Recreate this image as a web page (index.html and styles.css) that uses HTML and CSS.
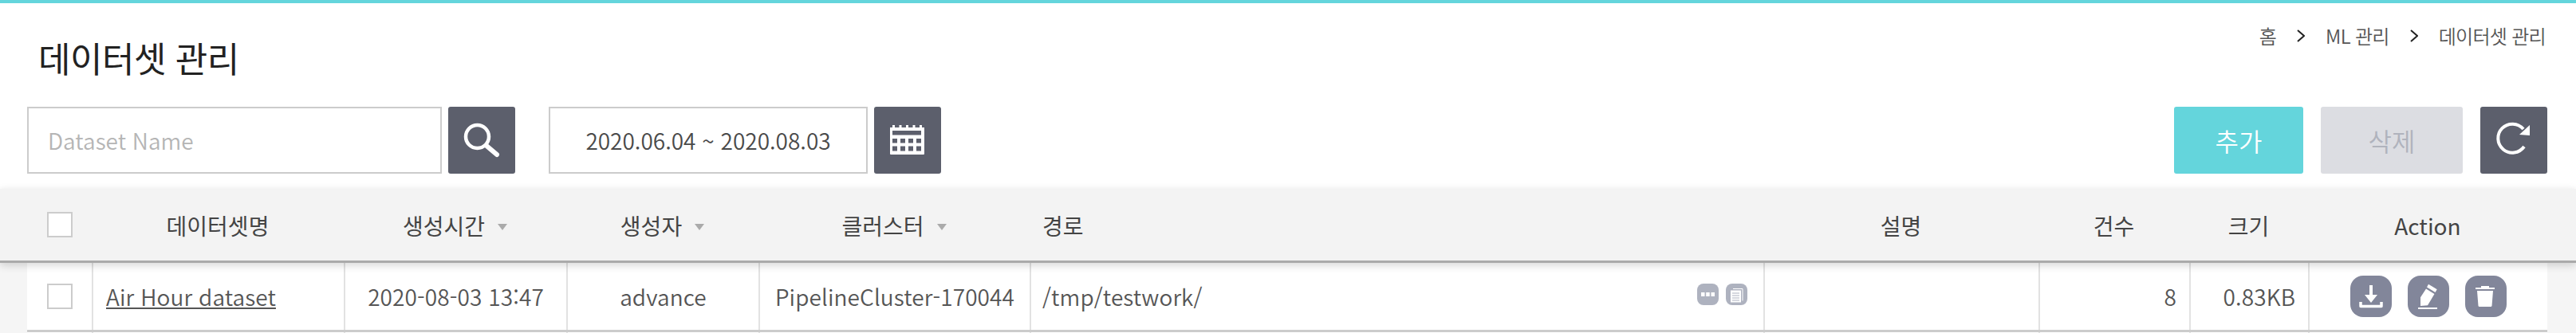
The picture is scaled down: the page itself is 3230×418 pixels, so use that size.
FILE: index.html
```html
<!DOCTYPE html>
<html lang="ko">
<head>
<meta charset="UTF-8">
<meta name="viewport" content="width=device-width, initial-scale=1.0">
<title>데이터셋 관리</title>
<link rel="stylesheet" href="styles.css">
</head>
<body>

<!-- Title and breadcrumb -->
<div class="page-head">
    <h1 class="page-title">데이터셋 관리</h1>
    <div class="breadcrumb">
        <span>홈</span>
        <svg class="crumb-sep" viewBox="0 0 10 16"><path d="M1 1l8 7-8 7" fill="none" stroke="#222" stroke-width="2"/></svg>
        <span>ML 관리</span>
        <svg class="crumb-sep" viewBox="0 0 10 16"><path d="M1 1l8 7-8 7" fill="none" stroke="#222" stroke-width="2"/></svg>
        <span>데이터셋 관리</span>
    </div>
</div>

<!-- Toolbar -->
<div class="toolbar">
    <div class="field field-name">Dataset Name</div>
    <button class="icon-btn">
        <svg viewBox="0 0 84 84"><circle cx="36.5" cy="37.5" r="14.5" fill="none" stroke="#fff" stroke-width="4.5"/><path d="M48 49l13 11" stroke="#fff" stroke-width="6" stroke-linecap="round"/></svg>
    </button>
    <div class="field field-date">2020.06.04 ~ 2020.08.03</div>
    <button class="icon-btn">
        <svg viewBox="0 0 84 84">
            <path fill="#fff" d="M20 26h3v-3h3v3h5.500v-3h3v3h5.500v-3h3v3h5.500v-3h3v3h5.500v-3h3v3h3v33a1 1 0 0 1-1 1H21a1 1 0 0 1-1-1z"/>
            <path fill="#5c5f6c" d="M23 30h36v5.500H23zM23 40h6v5.500h-6zM33 40h6v5.500h-6zM43 40h6v5.500h-6zM53 40h6v5.500h-6zM23 49.500h6v6h-6zM33 49.500h6v6h-6zM43 49.500h6v6h-6zM53 49.500h6v6h-6z"/>
        </svg>
    </button>
    <div class="toolbar-right">
        <button class="btn btn-add">추가</button>
        <button class="btn btn-del">삭제</button>
        <button class="icon-btn btn-refresh">
            <svg viewBox="0 0 84 84"><path d="M54 28A18 18 0 1 0 55 50" fill="none" stroke="#fff" stroke-width="4"/><path fill="#fff" d="M62 23l0 13-13-1z"/></svg>
        </button>
    </div>
</div>

<!-- Table -->
<div class="grid-head">
    <div class="cell"><span class="check"></span></div>
    <div class="cell"><span class="head-label">데이터셋명</span></div>
    <div class="cell"><span class="head-label">생성시간</span><i class="sort"></i></div>
    <div class="cell"><span class="head-label">생성자</span><i class="sort"></i></div>
    <div class="cell"><span class="head-label">클러스터</span><i class="sort"></i></div>
    <div class="cell cell-left"><span class="head-label">경로</span></div>
    <div class="cell"><span class="head-label">설명</span></div>
    <div class="cell"><span class="head-label">건수</span></div>
    <div class="cell"><span class="head-label">크기</span></div>
    <div class="cell"><span class="head-label">Action</span></div>
</div>

<div class="grid-row">
    <div class="cell"><span class="check"></span></div>
    <div class="cell cell-left"><a href="#" class="name-link">Air Hour dataset</a></div>
    <div class="cell">2020-08-03 13:47</div>
    <div class="cell">advance</div>
    <div class="cell">PipelineCluster-170044</div>
    <div class="cell cell-left cell-path">
        <span>/tmp/testwork/</span>
        <span class="path-icons">
            <span class="mini-btn"><svg viewBox="0 0 27 27"><path fill="#fff" d="M5 11h4.500v5H5zM11.200 11h4.500v5h-4.500zM17.500 11H22v5h-4.500z"/></svg></span>
            <span class="mini-btn"><svg viewBox="0 0 27 27"><path fill="none" stroke="#fff" d="M9 6.500h12v15"/><path fill="#fff" d="M6 8.500h13v15H6z"/><path stroke="#aeb2bf" stroke-width="1.200" d="M8 12h9M8 15h9M8 18h9M8 21h9"/></svg></span>
        </span>
    </div>
    <div class="cell"></div>
    <div class="cell cell-right">8</div>
    <div class="cell cell-right">0.83KB</div>
    <div class="cell cell-actions">
        <span class="act-btn"><svg viewBox="0 0 52 52"><path fill="#fff" d="M24 12h4v12h6l-8 10-8-10h6z"/><path fill="none" stroke="#fff" stroke-width="3.500" stroke-linejoin="round" d="M13 33v5.500h26V33"/></svg></span>
        <span class="act-btn"><svg viewBox="0 0 52 52"><path fill="#fff" d="M26 10.700l10.700 6.600-2.200 3.700-10.500-6.500zM23 16.500l10.500 6.500L25 37.300l-9 .7V27.300z"/><path stroke="#fff" stroke-width="2" d="M13 41h24"/></svg></span>
        <span class="act-btn"><svg viewBox="0 0 52 52"><path fill="#fff" d="M15 19h20l-1.500 19a1.500 1.500 0 0 1-1.500 1H18a1.500 1.500 0 0 1-1.500-1z"/><path stroke="#fff" stroke-width="2" d="M13 16h24M20 14h10"/></svg></span>
    </div>
</div>
<div class="grid-row grid-row-next">
    <div class="cell"></div><div class="cell"></div><div class="cell"></div><div class="cell"></div><div class="cell"></div>
    <div class="cell"></div><div class="cell"></div><div class="cell"></div><div class="cell"></div><div class="cell"></div>
</div>

</body>
</html>
```

FILE: styles.css
```css
/* Dataset management page */
html, body {
    margin: 0;
    height: 418px;
    overflow: hidden;
}

body {
    background-color: #f5f5f5;
    font-family: "Noto Sans CJK KR", "Noto Sans", sans-serif;
    font-weight: 350;
    color: #555;
}

button {
    border: 0;
    padding: 0;
    font-family: inherit;
    font-weight: inherit;
}

.page-head {
    display: flex;
    justify-content: space-between;
    align-items: flex-start;
    box-sizing: border-box;
    height: 134px;
    border-top: 4px solid #64d5dc;
    padding: 0 38px 0 48px;
    background-color: #fff;
}

.page-title {
    margin: 0;
    padding-top: 39px;
    font-size: 44px;
    line-height: 58px;
    letter-spacing: -0.5px;
    font-weight: 400;
    color: #222;
}

.breadcrumb {
    display: flex;
    align-items: center;
    gap: 26px;
    padding-top: 24px;
    font-size: 24px;
    line-height: 34px;
    letter-spacing: -0.7px;
}

.crumb-sep {
    width: 10px;
    height: 16px;
}

.toolbar {
    display: flex;
    height: 84px;
    padding: 0 36px 19px 34px;
    background-color: #fff;
}

.field {
    display: flex;
    align-items: center;
    box-sizing: border-box;
    height: 84px;
    border: 2px solid #ccc;
    font-size: 28px;
    background-color: #fff;
}

.field-name {
    width: 520px;
    padding-left: 24px;
    color: #b5b5b5;
}

.field-date {
    justify-content: center;
    width: 400px;
    margin-left: 42px;
    color: #4a4a4a;
}

.icon-btn {
    flex: none;
    width: 84px;
    height: 84px;
    margin-left: 8px;
    border-radius: 3px;
    background-color: #5c5f6c;
}

.icon-btn svg {
    display: block;
    width: 84px;
    height: 84px;
}

.toolbar-right {
    display: flex;
    margin-left: auto;
}

.btn {
    height: 84px;
    border-radius: 3px;
    font-size: 32px;
}

.btn-add {
    width: 162px;
    background-color: #64d5dc;
    color: #fff;
}

.btn-del {
    width: 178px;
    margin-left: 22px;
    background-color: #dcdde2;
    color: #b0b3bd;
}

.btn-refresh {
    margin-left: 22px;
}

.grid-head,
.grid-row {
    display: grid;
    grid-template-columns: 81px 316px 279px 241px 340px 920px 345px 189px 149px 300px;
}

.grid-head {
    position: relative;
    z-index: 1;
    box-sizing: border-box;
    height: 93px;
    padding-left: 34px;
    border-bottom: 3px solid #aaa;
    background-color: #f3f3f3;
    font-size: 28px;
    font-weight: 400;
    color: #444;
    box-shadow: 0 3px 10px rgba(0, 0, 0, 0.16);
}

.head-label {
    padding-top: 2px;
}

.grid-row {
    box-sizing: border-box;
    width: 3160px;
    height: 87px;
    margin-left: 34px;
    border-bottom: 3px solid #ccc;
    background-color: #fff;
    font-size: 28px;
    letter-spacing: 0.1px;
}

.grid-row-next {
    height: 1px;
    border-bottom: 0;
}

.cell {
    display: flex;
    align-items: center;
    justify-content: center;
    box-sizing: border-box;
    min-width: 0;
}

.grid-row .cell {
    border-left: 2px solid #e2e2e2;
}

.grid-row .cell:first-child {
    border-left: 0;
}

.cell-left {
    justify-content: flex-start;
    padding-left: 16px;
}

.cell-right {
    justify-content: flex-end;
    padding-right: 16px;
}

.grid-row .cell-path {
    justify-content: space-between;
    padding-left: 14px;
    padding-right: 20px;
}

.name-link {
    color: #555;
}

.check {
    box-sizing: border-box;
    width: 32px;
    height: 32px;
    border: 2px solid #ccc;
    background-color: #fff;
}

.sort {
    width: 0;
    height: 0;
    margin: 6px 0 0 16px;
    border-style: solid;
    border-width: 8px 6px 0;
    border-color: #aaa transparent transparent;
}

.path-icons {
    display: flex;
    gap: 9px;
    margin-bottom: 6px;
}

.mini-btn {
    width: 27px;
    height: 27px;
    border-radius: 8px;
    background-color: #aeb2bf;
}

.mini-btn svg,
.act-btn svg {
    display: block;
    width: 100%;
    height: 100%;
}

.cell-actions {
    gap: 20px;
}

.act-btn {
    width: 52px;
    height: 52px;
    border-radius: 16px;
    background-color: #82869a;
}
```
